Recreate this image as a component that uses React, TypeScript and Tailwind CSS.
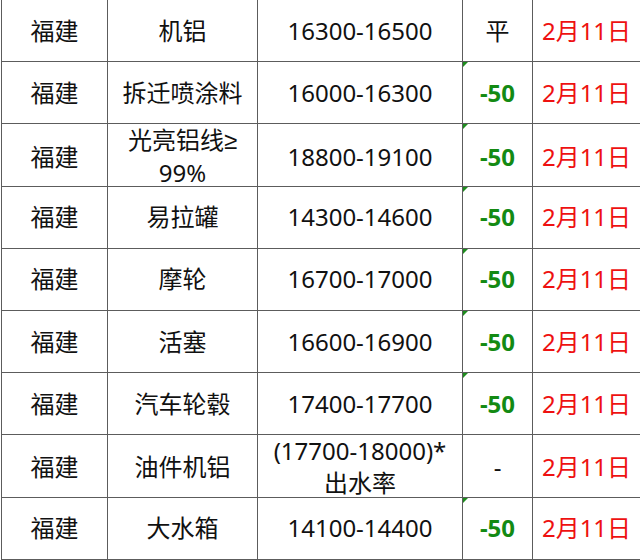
import React from 'react'

type Row = { name: React.ReactNode[]; price: string[]; change: string; date: string }

const rows: Row[] = [
  { name: ['机铝'], price: ['16300-16500'], change: '平', date: '2月11日' },
  { name: ['拆迁喷涂料'], price: ['16000-16300'], change: '-50', date: '2月11日' },
  {
    name: [
      <>
        光亮铝线<span style={{ fontFamily: '"Liberation Sans", sans-serif' }}>≥</span>
      </>,
      '99%',
    ],
    price: ['18800-19100'],
    change: '-50',
    date: '2月11日',
  },
  { name: ['易拉罐'], price: ['14300-14600'], change: '-50', date: '2月11日' },
  { name: ['摩轮'], price: ['16700-17000'], change: '-50', date: '2月11日' },
  { name: ['活塞'], price: ['16600-16900'], change: '-50', date: '2月11日' },
  { name: ['汽车轮毂'], price: ['17400-17700'], change: '-50', date: '2月11日' },
  { name: ['油件机铝'], price: ['(17700-18000)*', '出水率'], change: '-', date: '2月11日' },
  { name: ['大水箱'], price: ['14100-14400'], change: '-50', date: '2月11日' },
]

const cell = 'flex flex-col items-center justify-center text-center border-r border-[#5c5c5c] leading-[32px]'

const App = () => {
  return (
    <div
      className="w-[640px] h-[560px] bg-white text-[24px] text-[#111]"
      style={{ fontFamily: '"Noto Sans", "Noto Sans CJK SC", sans-serif' }}
    >
      <div className="ml-[1px] border-l border-[#5c5c5c]">
        {rows.map((r, i) => (
          <div
            key={i}
            className="grid grid-cols-[106px_150px_205px_70px_1fr] h-[62.2px] border-b border-[#5c5c5c]"
          >
            <div className={cell}>福建</div>
            <div className={cell}>
              {r.name.map((t, j) => (
                <span key={j}>{t}</span>
              ))}
            </div>
            <div className={cell}>
              {r.price.map((t, j) => (
                <span key={j}>{t}</span>
              ))}
            </div>
            <div className={`${cell} relative`}>
              {r.change === '-50' && (
                <span className="absolute left-0 top-0 w-0 h-0 border-t-[5px] border-r-[5px] border-t-[#1e8c1e] border-r-transparent" />
              )}
              <span className={r.change === '-50' ? 'font-bold text-[#138a13]' : ''}>{r.change}</span>
            </div>
            <div className="flex items-center justify-center text-[#ee1111]">{r.date}</div>
          </div>
        ))}
      </div>
    </div>
  )
}

export default App
